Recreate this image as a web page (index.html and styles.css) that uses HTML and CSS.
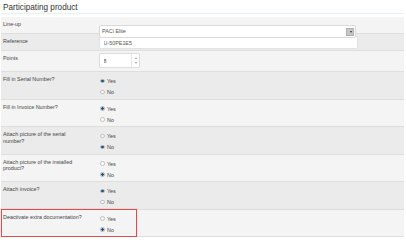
FILE: index.html
```html
<!DOCTYPE html>
<html lang="en">
  <head>
    <meta charset="UTF-8" />
    <meta name="viewport" content="width=device-width, initial-scale=1.0" />
    <title>Participating product</title>
    <link rel="stylesheet" href="styles.css">
  </head>

  <body>
    <div class="panel">
      <h3 class="title">Participating product</h3>
      <div class="rows">
        <div class="row row-field">
          <div class="label">Line-up</div>
          <div class="field">
            <span class="select">
              <select>
                <option>PACi Elite</option>
              </select>
            </span>
          </div>
        </div>
        <div class="row row-field">
          <div class="label">Reference</div>
          <div class="field">
            <input class="text" type="text" value="U-50PE1E5" />
          </div>
        </div>
        <div class="row row-points">
          <div class="label">Points</div>
          <div class="field">
            <span class="spin">
              <input type="text" value="8" />
              <span class="arrows"><i class="up"></i><i class="down"></i></span>
            </span>
          </div>
        </div>
        <div class="row">
          <div class="label">Fill in Serial Number?</div>
          <div class="field radios">
            <label class="opt"><input type="radio" name="r1" checked /> Yes</label>
            <label class="opt"><input type="radio" name="r1" /> No</label>
          </div>
        </div>
        <div class="row">
          <div class="label">Fill in Invoice Number?</div>
          <div class="field radios">
            <label class="opt"><input type="radio" name="r2" checked /> Yes</label>
            <label class="opt"><input type="radio" name="r2" /> No</label>
          </div>
        </div>
        <div class="row">
          <div class="label">Attach picture of the serial number?</div>
          <div class="field radios">
            <label class="opt"><input type="radio" name="r3" /> Yes</label>
            <label class="opt"><input type="radio" name="r3" checked /> No</label>
          </div>
        </div>
        <div class="row">
          <div class="label">Attach picture of the installed product?</div>
          <div class="field radios">
            <label class="opt"><input type="radio" name="r4" /> Yes</label>
            <label class="opt"><input type="radio" name="r4" checked /> No</label>
          </div>
        </div>
        <div class="row">
          <div class="label">Attach invoice?</div>
          <div class="field radios">
            <label class="opt"><input type="radio" name="r5" checked /> Yes</label>
            <label class="opt"><input type="radio" name="r5" /> No</label>
          </div>
        </div>
        <div class="row flagged">
          <div class="label">Deactivate extra documentation?</div>
          <div class="field radios">
            <label class="opt"><input type="radio" name="r6" /> Yes</label>
            <label class="opt"><input type="radio" name="r6" checked /> No</label>
          </div>
          <div class="flag"></div>
        </div>
      </div>
    </div>
  </body>
</html>
```

FILE: styles.css
```css
body {
  margin: 0;
  padding: 0;
  background: #fff;
  font-family: "Liberation Sans", Arial, sans-serif;
  color: #444;
}
.panel {
  width: 403px;
  margin-left: 1px;
}
.title {
  margin: 0 0 3px 0;
  padding: 2px 0 0 2px;
  height: 11px;
  line-height: 11px;
  font-size: 8.2px;
  font-weight: normal;
  color: #333;
  border-bottom: 1px solid #e6f1f6;
}

.row {
  display: flex;
  background: #f4f4f4;
  border-bottom: 1px solid #dedede;
}
.row:nth-child(even) {
  background: #ebebeb;
}
.row .label {
  width: 98px;
  box-sizing: border-box;
  padding: 4px 14px 0 2px;
  font-size: 5.4px;
  line-height: 6.5px;
}
.row .field {
  flex: 1;
}

/* line-up / reference */
.row-field .label {
  padding-top: 4px;
}
.row-field .field {
  padding: 2px 0 1px 0;
  height: 13px;
}
.select {
  position: relative;
  display: inline-block;
}
.select select {
  appearance: none;
  -webkit-appearance: none;
  width: 257px;
  height: 13px;
  margin: 0;
  padding: 0 2px;
  font-family: inherit;
  font-size: 5.4px;
  color: #555;
  background: #fff;
  border: 1px solid #d9d9d9;
  border-radius: 2px;
  display: block;
}
.select::after {
  content: "";
  position: absolute;
  right: 2px;
  top: 3px;
  width: 6px;
  height: 6px;
  background: #c6c6c6;
  border: 1px solid #b0b0b0;
  pointer-events: none;
}
.select::before {
  content: "";
  position: absolute;
  right: 4.5px;
  top: 6px;
  width: 0;
  height: 0;
  border-left: 1.5px solid transparent;
  border-right: 1.5px solid transparent;
  border-top: 2px solid #333;
  z-index: 1;
}
.text {
  display: block;
  box-sizing: border-box;
  width: 259px;
  height: 13px;
  margin: 0;
  padding: 0 3.5px;
  font-family: inherit;
  font-size: 5.4px;
  color: #555;
  background: #fff;
  border: 1px solid #e2e2e2;
  border-radius: 2px;
  outline: none;
}

/* points */
.row-points .label {
  padding-top: 3.5px;
}
.row-points .field {
  padding: 2px 0 3px 0;
}
.spin {
  display: flex;
  box-sizing: border-box;
  width: 41px;
  height: 15px;
  background: #fff;
  border: 1px solid #dcdcdc;
  border-radius: 2px;
}
.spin input {
  flex: 1;
  min-width: 0;
  margin: 0;
  padding: 0 3.5px;
  border: 0;
  outline: none;
  font-family: inherit;
  font-size: 5.4px;
  color: #555;
  background: transparent;
}
.spin .arrows {
  width: 7px;
  border-left: 1px solid #e6e6e6;
  display: flex;
  flex-direction: column;
  align-items: center;
  justify-content: center;
  gap: 3px;
}
.spin .up,
.spin .down {
  width: 0;
  height: 0;
  border-left: 1.5px solid transparent;
  border-right: 1.5px solid transparent;
}
.spin .up {
  border-bottom: 2px solid #999;
}
.spin .down {
  border-top: 2px solid #999;
}

/* radios */
.radios {
  padding: 3.5px 0 1px 1px;
}
.opt {
  display: flex;
  align-items: center;
  gap: 2.5px;
  height: 11px;
  font-size: 5.4px;
  color: #444;
}
.opt input {
  appearance: none;
  -webkit-appearance: none;
  width: 4.5px;
  height: 4.5px;
  margin: 0;
  box-sizing: border-box;
  border: 1px solid #c2c2c2;
  border-radius: 50%;
  background: #fafafa;
}
.opt input:checked {
  border-color: #a9b8c8;
  background: radial-gradient(circle, #2c4c70 0, #2c4c70 1.2px, #dfe6ee 1.5px);
}

/* highlighted row */
.flagged {
  position: relative;
}
.flag {
  position: absolute;
  left: 0;
  top: -1px;
  bottom: -1px;
  width: 136px;
  box-sizing: border-box;
  border: 1px solid #dc4e4e;
  box-shadow: 0 0 1px rgba(220, 78, 78, 0.6);
  pointer-events: none;
}
```
